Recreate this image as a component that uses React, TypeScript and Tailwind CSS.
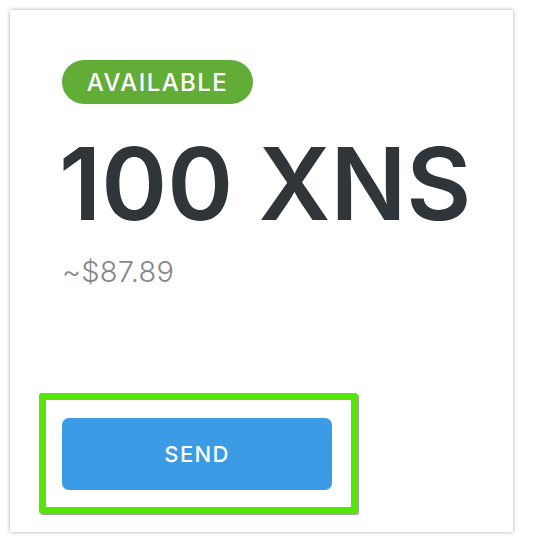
import React from "react";

export default function App() {
  return (
    <div className="w-[542px] h-[542px] bg-white relative" style={{ fontFamily: "Inter, 'Open Sans', sans-serif" }}>
      <div className="absolute left-[10px] top-[10px] w-[503px] h-[522px] bg-white shadow-[0_0_4px_rgba(0,0,0,0.35)] flex flex-col pl-[52px] pt-[50px]">
        <div className="h-[44px] w-[191px] rounded-full bg-[#62ad37] flex items-center justify-center">
          <span className="text-white text-[24px] font-medium tracking-[0.06em] leading-none pt-[1px]">AVAILABLE</span>
        </div>
        <div className="mt-[30px] text-[100px] leading-none font-semibold text-[#2f3538] -ml-[3px]">100 XNS</div>
        <div className="mt-[23px] text-[29px] leading-none font-light tracking-[0.01em] text-[#84888b]">~$87.89</div>
        <div className="mt-auto mb-[18px] -ml-[23px] w-[319px] h-[121px] border-[7px] border-[#55e607] rounded-[3px] shadow-[1px_1px_1px_rgba(0,0,0,0.4)] pl-[16px] pt-[18px]">
          <button className="w-[270px] h-[72px] rounded-[7px] bg-[#3c9be5] text-white text-[22px] font-medium tracking-[0.06em] flex items-center justify-center">
            SEND
          </button>
        </div>
      </div>
    </div>
  );
}
